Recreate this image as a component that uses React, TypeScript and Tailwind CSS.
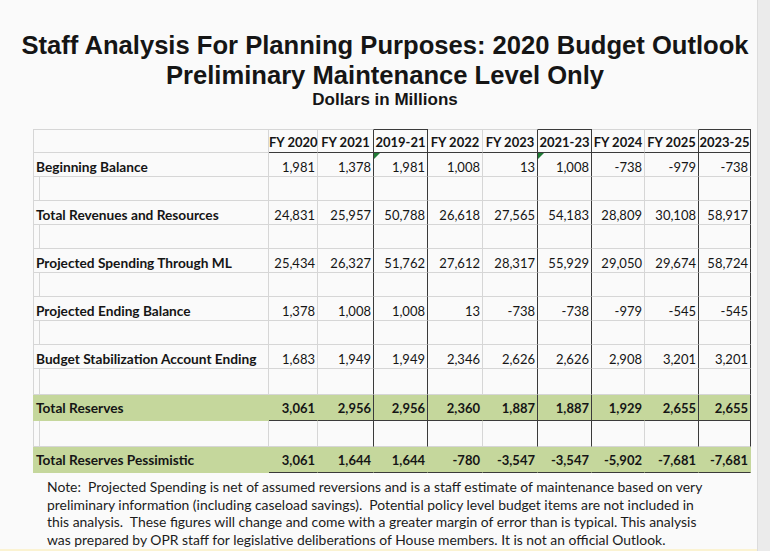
import React from "react";

type Row =
  | { kind: "head" }
  | { kind: "data"; label: string; values: string[] }
  | { kind: "blank"; tall?: boolean }
  | { kind: "green"; label: string; values: string[]; boxes: boolean };

const headers = ["FY 2020", "FY 2021", "2019-21", "FY 2022", "FY 2023", "2021-23", "FY 2024", "FY 2025", "2023-25"];
const boxed = [false, false, true, false, false, true, false, false, true];

const rows: Row[] = [
  { kind: "head" },
  { kind: "data", label: "Beginning Balance", values: ["1,981", "1,378", "1,981", "1,008", "13", "1,008", "-738", "-979", "-738"] },
  { kind: "blank" },
  { kind: "data", label: "Total Revenues and Resources", values: ["24,831", "25,957", "50,788", "26,618", "27,565", "54,183", "28,809", "30,108", "58,917"] },
  { kind: "blank" },
  { kind: "data", label: "Projected Spending Through ML", values: ["25,434", "26,327", "51,762", "27,612", "28,317", "55,929", "29,050", "29,674", "58,724"] },
  { kind: "blank" },
  { kind: "data", label: "Projected Ending Balance", values: ["1,378", "1,008", "1,008", "13", "-738", "-738", "-979", "-545", "-545"] },
  { kind: "blank" },
  { kind: "data", label: "Budget Stabilization Account Ending", values: ["1,683", "1,949", "1,949", "2,346", "2,626", "2,626", "2,908", "3,201", "3,201"] },
  { kind: "blank", tall: true },
  { kind: "green", label: "Total Reserves", values: ["3,061", "2,956", "2,956", "2,360", "1,887", "1,887", "1,929", "2,655", "2,655"], boxes: true },
  { kind: "blank", tall: true },
  { kind: "green", label: "Total Reserves Pessimistic", values: ["3,061", "1,644", "1,644", "-780", "-3,547", "-3,547", "-5,902", "-7,681", "-7,681"], boxes: false },
];

const widths = [49, 56, 54, 55, 55, 54, 53, 54, 52];

// right border of value column i is dark when it touches a boxed column
const darkRight = (i: number) => boxed[i] || (i + 1 < boxed.length && boxed[i + 1]);

function Marker() {
  return (
    <svg className="absolute left-0 top-0" width="6" height="6" viewBox="0 0 6 6">
      <polygon points="0,0 6,0 0,6" fill="#1f7a35" />
    </svg>
  );
}

export default function App() {
  return (
    <div className="flex w-[770px] h-[551px] bg-[#fafafa] text-[#151515] overflow-hidden">
      <div className="flex flex-col w-[757px] h-full">
        <div className="pl-[13px] pt-[30px] text-center font-bold font-['Liberation_Sans',Arial,sans-serif]">
          <div className="text-[25.6px] leading-[30px]">Staff Analysis For Planning Purposes: 2020 Budget Outlook</div>
          <div className="text-[25.6px] leading-[30px]">Preliminary Maintenance Level Only</div>
          <div className="text-[17px] leading-[20px]">Dollars in Millions</div>
        </div>

        <table className="ml-[33px] mt-[19px] w-[718px] table-fixed border-separate border-spacing-0 font-['Lato',sans-serif] text-[13px] leading-[18px]">
          <colgroup>
            <col className="w-[7px]" />
            <col className="w-[229px]" />
            {widths.map((w, i) => (
              <col key={i} style={{ width: w }} />
            ))}
          </colgroup>
          <tbody>
            {rows.map((row, r) => {
              if (row.kind === "head") {
                return (
                  <tr key={r} className="h-[24px]">
                    <td className="border-l border-t border-b border-[#d6d6d6]" />
                    <td className="border-t border-r border-b border-[#d6d6d6]" />
                    {headers.map((h, i) => (
                      <td
                        key={i}
                        className={`pt-[2px] text-center font-bold whitespace-nowrap border-b border-b-[#3a3a3a] border-t border-r ${boxed[i] ? "border-t-[#3a3a3a]" : "border-t-[#d6d6d6]"} ${darkRight(i) ? "border-r-[#3a3a3a]" : "border-r-[#d6d6d6]"}`}
                      >
                        {h}
                      </td>
                    ))}
                  </tr>
                );
              }
              if (row.kind === "blank") {
                return (
                  <tr key={r} className={row.tall ? "h-[26px]" : "h-[24px]"}>
                    <td className="border-l border-r border-b border-[#d6d6d6]" />
                    <td className="border-r border-b border-[#d6d6d6]" />
                    {widths.map((_, i) => (
                      <td
                        key={i}
                        className={`border-r border-b border-b-[#d6d6d6] ${darkRight(i) ? "border-r-[#3a3a3a]" : "border-r-[#d6d6d6]"}`}
                      />
                    ))}
                  </tr>
                );
              }
              if (row.kind === "data") {
                return (
                  <tr key={r} className="h-[24px]">
                    <td colSpan={2} className="pt-[4px] pl-[2px] text-[13.7px] font-bold whitespace-nowrap border-l border-r border-b border-[#d6d6d6]">
                      {row.label}
                    </td>
                    {row.values.map((v, i) => (
                      <td
                        key={i}
                        className={`relative pt-[4px] text-right pr-[2px] whitespace-nowrap border-r border-b border-b-[#d6d6d6] ${darkRight(i) ? "border-r-[#3a3a3a]" : "border-r-[#d6d6d6]"}`}
                      >
                        {r === 1 && (i === 2 || i === 5) && <Marker />}
                        {v}
                      </td>
                    ))}
                  </tr>
                );
              }
              return (
                <tr key={r} className="h-[26px] bg-[#c5d79c]">
                  <td colSpan={2} className="pt-[1px] pl-[2px] text-[13.7px] font-bold whitespace-nowrap border-l border-r border-b border-[#c5d79c]">
                    {row.label}
                  </td>
                  {row.values.map((v, i) => (
                    <td
                      key={i}
                      className={`pt-[1px] text-right pr-[2px] font-bold whitespace-nowrap border-r border-b border-b-[#3a3a3a] ${row.boxes && darkRight(i) ? "border-r-[#3a3a3a]" : "border-r-[#c5d79c]"}`}
                    >
                      {v}
                    </td>
                  ))}
                </tr>
              );
            })}
          </tbody>
        </table>

        <div className="pl-[47px] mt-[5px] font-['Lato',sans-serif] text-[13.9px] leading-[17.7px] text-[#1c1c1c]">
          <div className="whitespace-pre">Note:  Projected Spending is net of assumed reversions and is a staff estimate of maintenance based on very</div>
          <div className="whitespace-pre">preliminary information (including caseload savings).  Potential policy level budget items are not included in</div>
          <div className="whitespace-pre">this analysis.  These figures will change and come with a greater margin of error than is typical. This analysis</div>
          <div className="whitespace-pre">was prepared by OPR staff for legislative deliberations of House members. It is not an official Outlook.</div>
        </div>
        <div className="mt-auto h-[2px] bg-[#fbf3d2]" />
      </div>
      <div className="flex-1 h-full bg-[#ebebeb] border-l border-[#dcdcdc]" />
    </div>
  );
}
